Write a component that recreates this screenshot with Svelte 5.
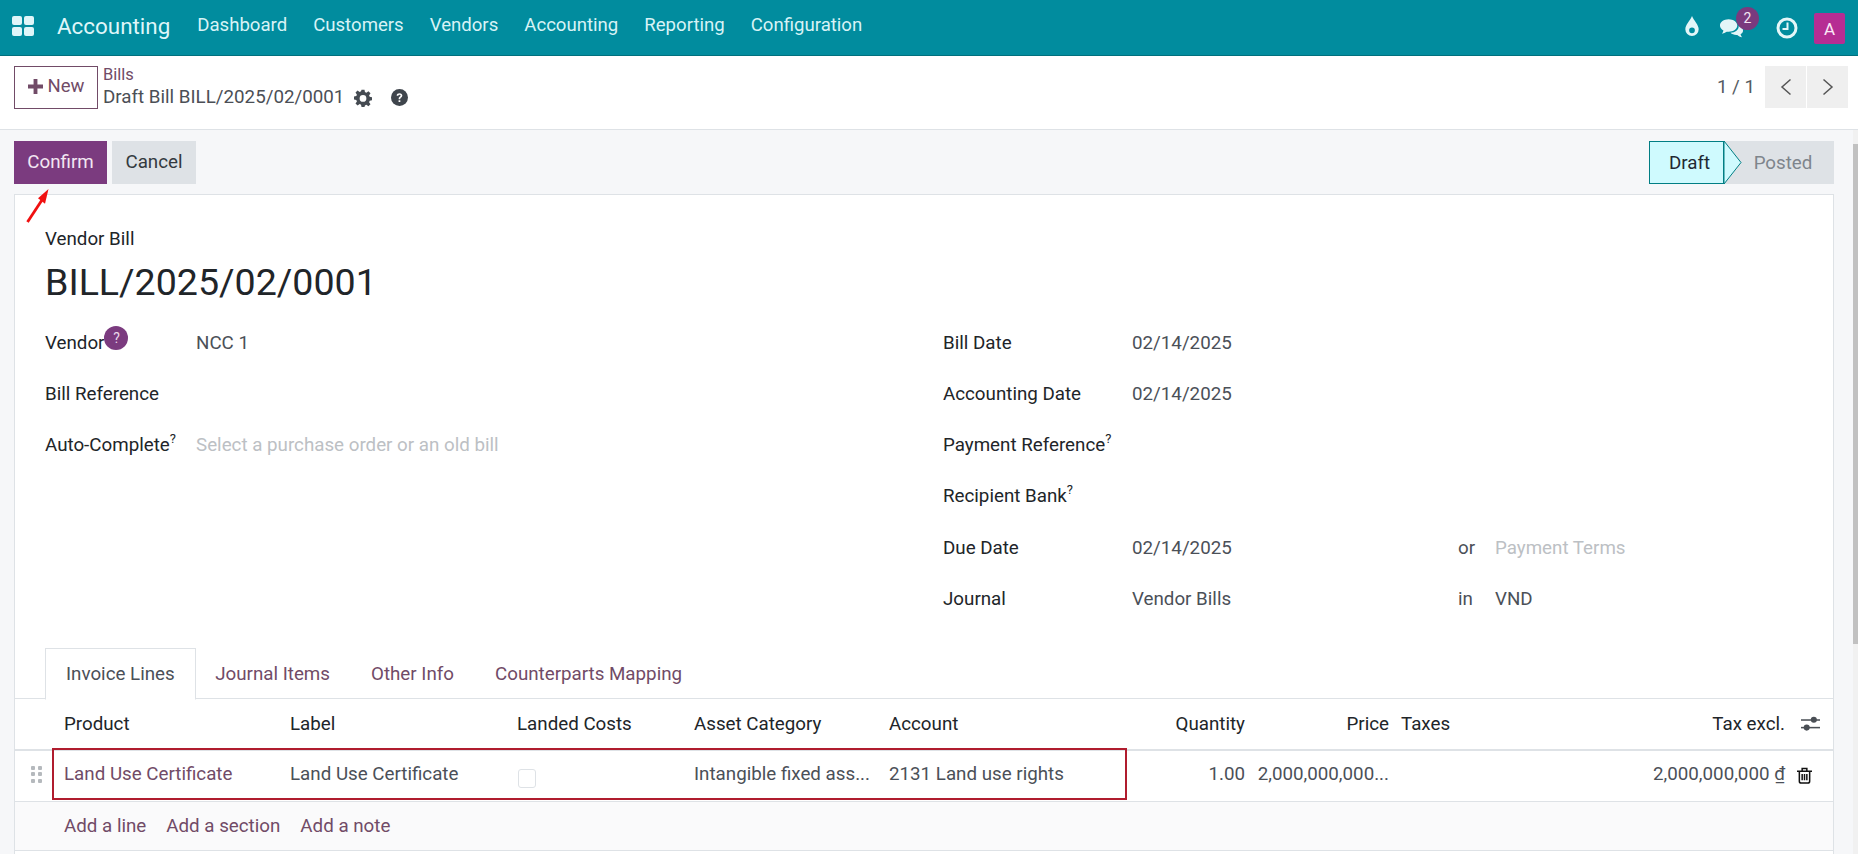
<script>
  const menu = ['Dashboard', 'Customers', 'Vendors', 'Accounting', 'Reporting', 'Configuration'];
  const tabs = ['Journal Items', 'Other Info', 'Counterparts Mapping'];
</script>

<div class="page">
  <header class="nav">
    <svg class="apps" viewBox="0 0 22 20" width="22" height="20"><g fill="#dff6f9"><rect x="0" y="0" width="10" height="9" rx="2"/><rect x="12" y="0" width="10" height="9" rx="2"/><rect x="0" y="11" width="10" height="9" rx="2"/><rect x="12" y="11" width="10" height="9" rx="2"/></g></svg>
    <span class="brand">Accounting</span>
    <nav class="menu">{#each menu as m}<span>{m}</span>{/each}</nav>
    <div class="systray">
      <svg viewBox="0 0 16 22" width="16" height="21"><path fill="#e4f6f8" fill-rule="evenodd" d="M8 0C10 5 15 9 15 14a7 7 0 0 1-14 0C1 9 6 5 8 0Zm0 12a3 3 0 1 0 0 6 3 3 0 0 0 0-6Z"/></svg>
      <span class="chat">
        <svg viewBox="0 0 26 21" width="25" height="21"><path fill="#e4f6f8" d="M10 1c5 0 9 3 9 6.500S15 14 10 14l-2-.1C6.500 15 4.800 15.600 3 16c.8-1 1.400-2 1.600-3.300C2.400 11.500 1 9.600 1 7.500 1 4 5 1 10 1Z"/><path fill="#e4f6f8" d="M20.500 8c2.900.6 4.500 2.500 4.500 4.500 0 1.700-1 3-2.600 4 .2 1 .8 2 1.600 3-2-.3-3.700-1-5-2.300-3 .2-5.500-.6-7-2.200 5-.1 8.500-3 8.500-7Z"/></svg>
        <b class="badge">2</b>
      </span>
      <svg viewBox="0 0 22 22" width="22" height="22"><circle cx="11" cy="11" r="9" fill="none" stroke="#e4f6f8" stroke-width="3"/><path d="M11.500 5.500v6.500H6.500" fill="none" stroke="#e4f6f8" stroke-width="2"/></svg>
      <span class="avatar">A</span>
    </div>
  </header>

  <section class="cp">
    <button class="new"><svg viewBox="0 0 14 14" width="15" height="15"><path fill="#714B67" d="M5.200 0h3.600v5.200H14v3.600H8.800V14H5.200V8.800H0V5.200h5.200Z"/></svg>New</button>
    <div class="crumbs">
      <a href="#bills">Bills</a>
      <div class="crumb-title">
        <span>Draft Bill BILL/2025/02/0001</span>
        <svg viewBox="0 0 24 24" width="18" height="18"><path fill="#454b52" fill-rule="evenodd" d="M10 1h4l.6 3.100 1.900.8L19.200 3 22 5.800l-1.900 2.700.8 1.900L24 11v4l-3.100.6-.8 1.900 1.900 2.700-2.800 2.800-2.700-1.900-1.900.8L14 24h-4l-.6-3.100-1.900-.8-2.700 1.900L2 19.200l1.900-2.700-.8-1.900L0 14v-4l3.100-.6.8-1.900L2 4.800 4.800 2l2.700 1.900 1.900-.8Zm2 7a4.500 4.500 0 1 0 0 9 4.500 4.500 0 0 0 0-9Z"/></svg>
        <svg class="help" viewBox="0 0 24 24" width="17" height="17"><circle cx="12" cy="12" r="12" fill="#3f454c"/><path d="M8 9.500C8 7 10 6 12 6c2.500 0 4 1.400 4 3.300 0 2.800-3 2.700-3 5H10.800c0-3.500 2.700-3.300 2.700-5 0-.8-.6-1.300-1.500-1.300s-1.500.6-1.700 1.700ZM10.700 16h2.500v2.500h-2.500Z" fill="#fff"/></svg>
      </div>
    </div>
    <div class="pager">
      <span>1 / 1</span>
      <div class="pbtns">
        <button aria-label="Previous"><svg viewBox="0 0 12 18" width="12" height="18"><path d="M10.500 1.500 2 9l8.500 7.500" fill="none" stroke="#555" stroke-width="1.500"/></svg></button>
        <button aria-label="Next"><svg viewBox="0 0 12 18" width="12" height="18"><path d="M1.500 1.500 10 9l-8.500 7.500" fill="none" stroke="#555" stroke-width="1.500"/></svg></button>
      </div>
    </div>
  </section>

  <main class="content">
    <div class="actions">
      <button class="confirm">Confirm</button>
      <button class="cancel">Cancel</button>
      <div class="status">
        <span class="draft">Draft</span>
        <svg class="chev" viewBox="0 0 18 43" width="18" height="43"><path d="M0 0 17 21.500 0 43Z" fill="#cffafe" stroke="#017e84" stroke-width="1"/></svg>
        <span class="posted">Posted</span>
      </div>
    </div>

    <svg class="arrow" viewBox="0 0 30 40" width="30" height="40"><path d="M2.500 36 17 14" stroke="#f01010" stroke-width="2.800" fill="none"/><path d="M23.500 3 13 12.300l7 5.400Z" fill="#f01010"/></svg>

    <article class="sheet">
      <div class="head">
        <div class="kind">Vendor Bill</div>
        <h1>BILL/2025/02/0001</h1>
      </div>
      <div class="groups">
        <div class="group">
          <div class="row"><label>Vendor<i class="qbadge">?</i></label><span>NCC 1</span></div>
          <div class="row"><label>Bill Reference</label></div>
          <div class="row"><label>Auto-Complete<sup>?</sup></label><span class="ph">Select a purchase order or an old bill</span></div>
        </div>
        <div class="group right">
          <div class="row"><label>Bill Date</label><span>02/14/2025</span></div>
          <div class="row"><label>Accounting Date</label><span>02/14/2025</span></div>
          <div class="row"><label>Payment Reference<sup>?</sup></label></div>
          <div class="row"><label>Recipient Bank<sup>?</sup></label></div>
          <div class="row split"><label>Due Date</label><span class="v">02/14/2025</span><span class="mid">or</span><span class="ph">Payment Terms</span></div>
          <div class="row split"><label>Journal</label><span class="v">Vendor Bills</span><span class="mid">in</span><span>VND</span></div>
        </div>
      </div>

      <div class="tabs">
        <span class="tab active">Invoice Lines</span>
        {#each tabs as t}<span class="tab">{t}</span>{/each}
      </div>

      <div class="table">
        <div class="tr th">
          <span class="c product">Product</span>
          <span class="c label">Label</span>
          <span class="c landed">Landed Costs</span>
          <span class="c asset">Asset Category</span>
          <span class="c account">Account</span>
          <span class="c qty">Quantity</span>
          <span class="c price">Price</span>
          <span class="c taxes">Taxes</span>
          <span class="c total">Tax excl.</span>
          <span class="c tail"><svg viewBox="0 0 20 16" width="19" height="16"><g fill="#4a4f55"><rect x="0" y="3" width="20" height="1.600"/><rect x="0" y="11" width="20" height="1.600"/><circle cx="13.500" cy="3.500" r="3.200"/><circle cx="6" cy="11.800" r="3.200"/></g></svg></span>
        </div>
        <div class="tr td">
          <span class="handle"><i></i><i></i><i></i><i></i><i></i><i></i></span>
          <span class="c product link">Land Use Certificate</span>
          <span class="c label">Land Use Certificate</span>
          <span class="c landed"><span class="check"></span></span>
          <span class="c asset">Intangible fixed ass...</span>
          <span class="c account">2131 Land use rights</span>
          <span class="c qty">1.00</span>
          <span class="c price">2,000,000,000...</span>
          <span class="c taxes"></span>
          <span class="c total">2,000,000,000 <u>₫</u></span>
          <span class="c tail"><svg viewBox="0 0 16 18" width="15" height="17"><path fill="none" stroke="#111" stroke-width="1.600" d="M2.500 4.500h11V15a2 2 0 0 1-2 2h-7a2 2 0 0 1-2-2ZM0 4.500h16M5.500 4V1.500h5V4M5.500 7.500v6.500M8 7.500v6.500M10.500 7.500v6.500"/></svg></span>
          <div class="redbox"></div>
        </div>
        <div class="tr adds">
          <a href="#line">Add a line</a><a href="#section">Add a section</a><a href="#note">Add a note</a>
        </div>
      </div>
    </article>
  </main>
  <div class="scroll"><div class="thumb"></div></div>
</div>

<style>
  :global(body) { margin: 0; overflow: hidden; }
  .page { position: relative; width: 1858px; height: 854px; overflow: hidden; font: 400 18.750px/1.5 Roboto, "Liberation Sans", sans-serif; color: #4b5058; background: #fff; }
  button { font: inherit; cursor: pointer; border: 0; padding: 0; }
  a { color: #714B67; text-decoration: none; }

  .nav { height: 55px; border-bottom: 1px solid #00707d; background: #018c9e; display: flex; align-items: center; color: #d8f3f6; padding: 0 13px 0 12px; }
  .apps { margin-top: -4px; }
  .brand { font-size: 22.400px; margin: -2px 0 0 23px; color: #dff6f9; }
  .menu { display: flex; gap: 26px; margin: -3px 0 0 27px; font-size: 18.600px; }
  .systray { margin-left: auto; display: flex; align-items: center; }
  .systray > svg:first-child { margin-right: 19px; margin-top: -3px; }
  .chat { position: relative; display: flex; margin-right: 32px; margin-top: 2px; }
  .badge { position: absolute; top: -11px; left: 17px; width: 23px; height: 23px; border-radius: 50%; background: #7a3a7e; color: #f3e6f2; font: 400 14px/22px Roboto, sans-serif; text-align: center; }
  .avatar { margin-left: 16px; width: 31px; height: 31px; background: #b62d93; border-radius: 2px; color: #fbe8f6; text-align: center; line-height: 33px; margin-top: 2px; font-size: 17px; }

  .cp { height: 63px; border-bottom: 1px solid #dee2e6; display: flex; align-items: flex-start; padding: 10px 0 0 14px; box-sizing: content-box; }
  .new { width: 84px; height: 43px; padding-bottom: 2px; background: #fff; border: 1px solid #714B67; color: #714B67; display: flex; align-items: center; justify-content: center; gap: 5px; font-size: 18.500px; }
  .crumbs { margin-left: 5px; line-height: 22px; margin-top: -1px; }
  .crumbs a { display: block; font-size: 16.500px; line-height: 20px; }
  .crumb-title { display: flex; align-items: center; font-size: 18.750px; line-height: 25px; color: #4b4f56; }
  .crumb-title svg { margin-left: 10px; }
  .crumb-title .help { margin-left: 19px; }
  .pager { margin-left: auto; display: flex; align-items: center; height: 42px; margin-right: 10px; margin-top: 0; gap: 10px; color: #555b62; font-size: 18.750px; }
  .pbtns { display: flex; gap: 1px; }
  .pbtns button { width: 41px; height: 42px; background: #efefef; display: flex; align-items: center; justify-content: center; }

  .content { position: relative; background: #f6f7f9; height: 735px; padding: 11px 25px 0 14px; box-sizing: content-box; }
  .actions { display: flex; align-items: flex-start; height: 43px; }
  .confirm { width: 93px; height: 43px; background: #7b3b7f; color: #f2e6f2; }
  .cancel { width: 84px; height: 43px; margin-left: 5px; background: #dee2e6; color: #343a40; }
  .status { margin-left: auto; display: flex; align-items: center; height: 43px; margin-right: -1px; background: #dee2e6; position: relative; }
  .draft { box-sizing: border-box; width: 75px; height: 43px; padding: 2px 0 0 6px; background: #cffafe; border: 1px solid #017e84; color: #1f2933; display: flex; align-items: center; justify-content: center; }
  .chev { display: block; flex: none; }
  .posted { box-sizing: border-box; width: 93px; padding: 2px 9px 0 0; color: #7e858c; text-align: center; margin-left: -1px; }
  .arrow { position: absolute; left: 25px; top: 56px; z-index: 3; }

  .sheet { position: relative; height: 680px; margin-top: 10px; background: #fff; border: 1px solid #dee2e6; border-bottom: 0; width: 1818px; }
  .head { padding: 32px 0 0 30px; }
  .kind { color: #212529; line-height: 25px; }
  h1 { margin: 5px 0 0; font-size: 37.600px; font-weight: 400; line-height: 50px; color: #212529; }
  .groups { display: grid; grid-template-columns: 898px 1fr; margin-top: 10px; padding-left: 30px; }
  .row { display: flex; height: 51.300px; align-items: center; }
  .row label { width: 151px; color: #212529; flex: none; position: relative; white-space: nowrap; }
  .right .row label { width: 189px; }
  .split .v { width: 326px; }
  .split .mid { width: 37px; }
  sup { font-size: 13px; line-height: 0; vertical-align: 8px; }
  .qbadge { position: absolute; top: -3px; width: 24px; height: 24px; border-radius: 50%; background: #7b3b7f; color: #ead8ea; font: 400 14px/24px Roboto, sans-serif; text-align: center; }
  .ph { color: #bcc0c4; }

  .tabs { display: flex; height: 50px; margin-top: 23px; padding-left: 30px; border-bottom: 1px solid #dee2e6; box-sizing: content-box; }
  .tab { padding: 0 20.500px; line-height: 52px; color: #714B67; }
  .tab.active { padding: 0 20px; margin-right: -1px; background: #fff; border: 1px solid #dee2e6; border-bottom: 1px solid #fff; color: #4b5058; height: 50px; line-height: 50px; box-sizing: content-box; }

  .table { width: 100%; }
  .tr { position: relative; display: flex; align-items: center; }
  .th { color: #212529; border-bottom: 2px solid #dee2e6; box-sizing: border-box; height: 52px; }
  .td { height: 51px; box-sizing: border-box; border-bottom: 1px solid #dee2e6; padding-bottom: 3px; }
  .c { flex: none; box-sizing: border-box; white-space: nowrap; }
  .product { margin-left: 49px; width: 226px; }
  .label { width: 227px; }
  .landed { width: 177px; }
  .asset { width: 195px; }
  .account { width: 237px; }
  .qty { width: 119px; text-align: right; }
  .price { width: 144px; text-align: right; }
  .taxes { width: 102px; margin-left: 12px; }
  .total { width: 282px; text-align: right; }
  .tail { width: 40px; display: flex; justify-content: center; padding-left: 14px; margin-left: -2px; }
  .td .tail { padding-left: 3px; padding-top: 2px; }
  .link { color: #714B67; }
  u { text-underline-offset: 2px; }
  .handle { position: absolute; left: 16px; top: 15px; display: grid; grid-template-columns: 4px 4px; gap: 2.500px 3px; }
  .handle i { width: 4px; height: 4px; background: #b5b9bd; border-radius: 1px; }
  .check { display: block; width: 18px; height: 19px; margin-left: 1px; border: 1px solid #dee2e6; border-radius: 3px; background: #fff; box-sizing: border-box; margin-top: 8px; }
  .redbox { position: absolute; left: 37px; top: -3px; width: 1075px; height: 52px; border: 2px solid #b01c2e; box-sizing: border-box; pointer-events: none; }
  .adds { height: 49px; box-sizing: border-box; background: #fafafb; border-bottom: 1px solid #dee2e6; padding: 1px 0 0 49px; gap: 20px; }

  .scroll { position: absolute; right: 0; top: 130px; bottom: 0; width: 5px; background: #f1f1f1; }
  .thumb { margin-top: 14px; height: 500px; background: #c1c1c1; }
</style>
